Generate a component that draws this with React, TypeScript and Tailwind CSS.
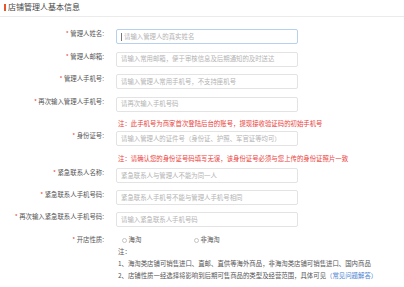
import React from "react";

const Label = ({ text }: { text: string }) => (
  <div className="w-[104px] shrink-0 text-right pt-[1px] leading-[8px] text-[6.4px] text-[#555] whitespace-nowrap">
    <span className="text-[#e8413b]">*</span> {text}:
  </div>
);

const Field = ({
  label,
  placeholder,
  className,
  focused,
}: {
  label: string;
  placeholder: string;
  className?: string;
  focused?: boolean;
}) => (
  <div className={"flex " + (className ?? "")}>
    <Label text={label} />
    <div
      className={
        "ml-[12px] w-[182px] h-[15px] rounded-[2px] border flex items-center pl-[4px] text-[6.4px] text-[#b3b3b3] whitespace-nowrap overflow-hidden " +
        (focused ? "border-[#b7d0ee]" : "border-[#e3e3e3]")
      }
    >
      {focused && <span className="w-[1px] h-[8px] bg-[#777] mr-[2px]" />}
      {placeholder}
    </div>
  </div>
);

export default function App() {
  return (
    <div className="w-[404px] h-[287px] overflow-hidden bg-white font-['Noto_Sans_CJK_SC','Noto_Sans',sans-serif]">
      <div className="flex items-center h-[17px] pb-[2px] pl-[4px] border-b border-[#ebebeb]">
        <span className="w-[2px] h-[7px] bg-[#e8552b]" />
        <span className="ml-[2px] text-[8px] leading-[10px] text-[#444]">店铺管理人基本信息</span>
      </div>
      <div className="flex flex-col pt-[12px]">
        <Field label="管理人姓名" placeholder="请输入管理人的真实姓名" focused />
        <Field className="mt-[7.5px]" label="管理人邮箱" placeholder="请输入常用邮箱，便于审核信息及后期通知的及时送达" />
        <Field className="mt-[7.5px]" label="管理人手机号" placeholder="请输入管理人常用手机号，不支持座机号" />
        <Field className="mt-[7.5px]" label="再次输入管理人手机号" placeholder="请再次输入手机号码" />
        <div className="mt-[7.5px] pl-[118px] leading-[9px] text-[6.4px] text-[#e8413b] whitespace-nowrap">
          注：此手机号为商家首次登陆后台的账号，提现接收验证码的初始手机号
        </div>
        <Field className="mt-[3px]" label="身份证号" placeholder="请输入管理人的证件号（身份证、护照、军官证等均可）" />
        <div className="mt-[7.5px] pl-[118px] leading-[9px] text-[6.4px] text-[#e8413b] whitespace-nowrap">
          注：请确认您的身份证号码填写无误，该身份证号必须与您上传的身份证照片一致
        </div>
        <Field className="mt-[5.5px]" label="紧急联系人名称" placeholder="紧急联系人与管理人不能为同一人" />
        <Field className="mt-[7px]" label="紧急联系人手机号码" placeholder="紧急联系人手机号不能与管理人手机号相同" />
        <Field className="mt-[7px]" label="再次输入紧急联系人手机号码" placeholder="请输入紧急联系人手机号码" />
        <div className="mt-[8px] flex items-center h-[10px]">
          <div className="w-[104px] shrink-0 text-right leading-[8px] text-[6.4px] text-[#555] whitespace-nowrap">
            <span className="text-[#e8413b]">*</span> 开店性质:
          </div>
          <div className="ml-[17.5px] w-[72px] flex items-center">
            <span className="w-[5px] h-[5px] rounded-full border border-[#c4c4c4]" />
            <span className="ml-[2px] text-[6.4px] leading-[8px] text-[#555]">海淘</span>
          </div>
          <div className="flex items-center">
            <span className="w-[5px] h-[5px] rounded-full border border-[#c4c4c4]" />
            <span className="ml-[2px] text-[6.4px] leading-[8px] text-[#555]">非海淘</span>
          </div>
        </div>
        <div className="mt-[1px] pl-[118px] text-[6.4px] leading-[12px] text-[#555] whitespace-nowrap">
          <div>注：</div>
          <div>1、海淘类店铺可销售进口、直邮、直供等海外商品，非海淘类店铺可销售进口、国内商品</div>
          <div>
            2、店铺性质一经选择将影响到后期可售商品的类型及经营范围，具体可见
            <span className="text-[#4a7fd0]">（常见问题解答）</span>
          </div>
        </div>
      </div>
    </div>
  );
}
